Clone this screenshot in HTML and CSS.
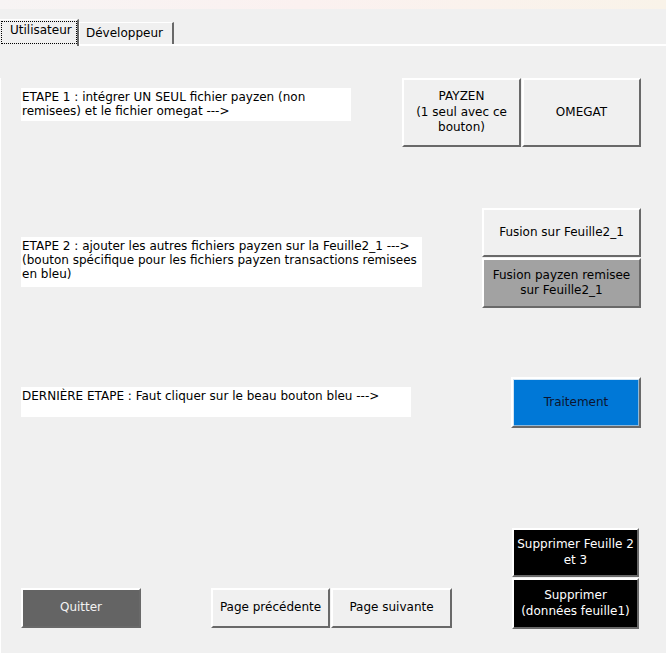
FILE: index.html
```html
<!DOCTYPE html>
<html lang="fr">
<head>
<meta charset="utf-8">
<title>Utilisateur</title>
<link rel="stylesheet" href="styles.css">
</head>
<body>
<div class="titlebar"></div>
<div class="tabs">
  <div class="tab active"><span class="focus">Utilisateur</span></div>
  <div class="tab">Développeur</div>
</div>
<div class="panel">
  <div class="row row1">
    <div class="label label1">ETAPE 1 : intégrer UN SEUL fichier payzen (non remisees) et le fichier omegat ---&gt;</div>
    <div class="group">
      <div class="btn btn-payzen">PAYZEN<br>(1 seul avec ce<br>bouton)</div>
      <div class="btn btn-omegat">OMEGAT</div>
    </div>
  </div>
  <div class="row row2">
    <div class="label label2">ETAPE 2 : ajouter les autres fichiers payzen sur la Feuille2_1 ---&gt; (bouton spécifique pour les fichiers payzen transactions remisees en bleu)</div>
    <div class="stack">
      <div class="btn btn-fusion">Fusion sur Feuille2_1</div>
      <div class="btn btn-fusion2 gray">Fusion payzen remisee<br>sur Feuille2_1</div>
    </div>
  </div>
  <div class="row row3">
    <div class="label label3">DERNIÈRE ETAPE : Faut cliquer sur le beau bouton bleu ---&gt;</div>
    <div class="btn btn-traitement blue">Traitement</div>
  </div>
  <div class="row row4">
    <div class="bottom-left">
      <div class="btn btn-quitter dark">Quitter</div>
      <div class="pager">
        <div class="btn btn-prev">Page précédente</div>
        <div class="btn btn-next">Page suivante</div>
      </div>
    </div>
    <div class="stack stack-del">
      <div class="btn btn-del1 black">Supprimer Feuille 2<br>et 3</div>
      <div class="btn btn-del2 black">Supprimer<br>(données feuille1)</div>
    </div>
  </div>
</div>
</body>
</html>
```
FILE: styles.css
```css
html, body {
  margin: 0;
  padding: 0;
}
body {
  width: 666px;
  height: 653px;
  overflow: hidden;
  background: #f0f0f0;
  font-family: "DejaVu Sans", Verdana, sans-serif;
  font-size: 12px;
  color: #000;
}
.titlebar {
  height: 9px;
  background: linear-gradient(to right, #f7f4f4 0%, #fbf1f0 45%, #f9f3e9 100%);
}
.tabs {
  display: flex;
  align-items: flex-end;
  margin-top: 10px;
  height: 25px;
  border-bottom: 2px solid #fff;
}
.tab {
  box-sizing: border-box;
  height: 22px;
  width: 95px;
  border-top: 1px solid #fff;
  border-left: 1px solid #fff;
  border-right: 2px solid #696969;
  padding: 3px 0 0 6px;
  line-height: 15px;
  white-space: nowrap;
}
.tab.active {
  height: 27px;
  width: 79px;
  margin-bottom: -2px;
  padding: 1px 0 3px 1px;
  border-left: 0;
  background: #f0f0f0;
}
.focus {
  display: block;
  box-sizing: border-box;
  height: 23px;
  border: 1px dotted #000;
  padding: 1px 0 0 8px;
  line-height: 15px;
}
.panel {
  height: 607px;
  box-sizing: border-box;
  border-left: 1px solid #fff;
  padding: 0 25px 0 20px;
}
.row {
  display: flex;
  align-items: flex-start;
  justify-content: space-between;
}
.row1 { margin-top: 32px; }
.row2 { margin-top: 61px; }
.row3 { margin-top: 69px; }
.row4 { margin-top: 100px; }
.label {
  box-sizing: border-box;
  background: #fff;
  padding: 2px 4px 0 1px;
  line-height: 14px;
}
.label1 { width: 330px; height: 33px; margin-top: 10px; }
.label2 { width: 401px; height: 50px; margin-top: 29px; }
.label3 { width: 390px; height: 30px; margin-top: 10px; }
.group {
  display: flex;
  gap: 1px;
}
.stack {
  display: flex;
  flex-direction: column;
  gap: 1px;
}
.btn {
  box-sizing: border-box;
  display: flex;
  align-items: center;
  justify-content: center;
  text-align: center;
  line-height: 15.5px;
  background: #f0f0f0;
  border-style: solid;
  border-width: 2px;
  border-color: #fff #696969 #696969 #fff;
}
.btn-payzen { width: 119px; height: 69px; }
.btn-omegat { width: 119px; height: 69px; }
.btn-fusion { width: 159px; height: 49px; }
.btn-fusion2 { width: 159px; height: 50px; }
.gray { background: #a2a2a2; }
.btn-traitement { width: 130px; height: 51px; }
.blue {
  background: #0078d7;
  color: #0d1530;
  box-shadow: inset 1px 1px 0 #cfe4f5, inset -1px -1px 0 #8fb8d8;
}
.bottom-left {
  display: flex;
  margin-top: 60px;
}
.pager {
  display: flex;
  gap: 1px;
  margin-left: 70px;
}
.btn-quitter { width: 120px; height: 40px; }
.dark { background: #646464; color: #f2f2f2; }
.btn-prev { width: 119px; height: 40px; }
.btn-next { width: 121px; height: 40px; }
.stack-del { margin-right: 2px; }
.btn-del1 { width: 127px; height: 49px; }
.btn-del2 { width: 127px; height: 51px; }
.black { background: #000; color: #fff; }
```
